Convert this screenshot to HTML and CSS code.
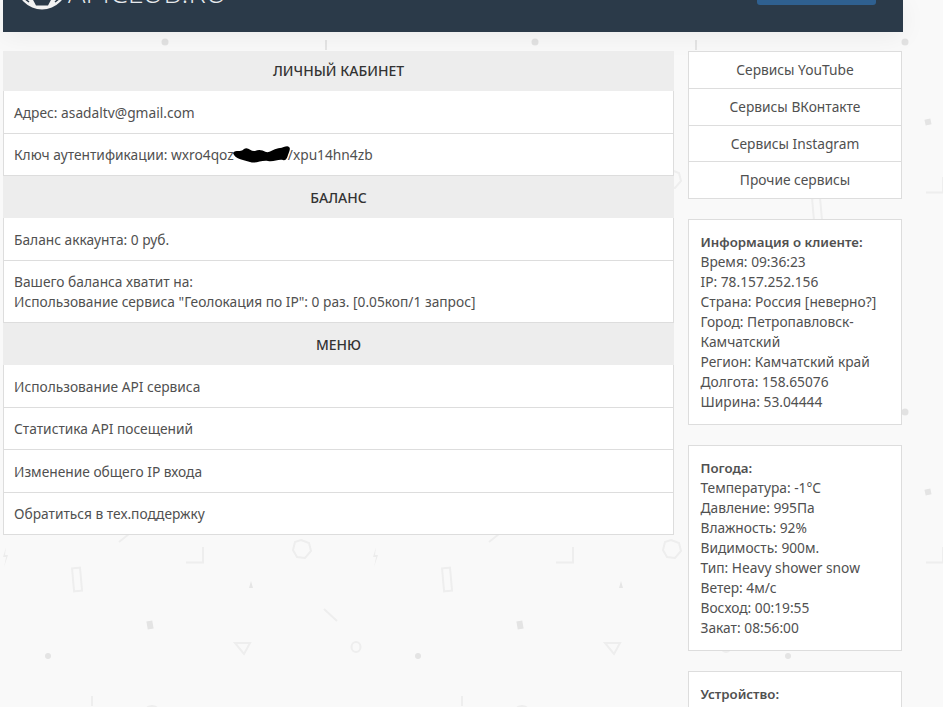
FILE: index.html
```html
<!DOCTYPE html>
<html lang="ru">
<head>
<meta charset="utf-8">
<title>Личный кабинет</title>
<link rel="stylesheet" href="styles.css">
</head>
<body>
<svg class="pattern" width="943" height="707" aria-hidden="true">
  <defs>
    <pattern id="tile" width="370" height="370" patternUnits="userSpaceOnUse">
      <g fill="none" stroke="#eeeeee" stroke-width="2">
        <circle cx="165" cy="42" r="3.5" fill="#e2e2e2" stroke="none"/>
        <path d="M326 40v10" stroke="#e4e4e4"/>
        <rect x="185" y="119" width="6" height="6" fill="#e4e4e4" stroke="none" transform="rotate(-12 188 122)"/>
        <path d="M301 170l8 3 2 8-6 7-8-1-4-7 2-8z"/>
        <path d="M6 177l-3 10h3l-2 10 4-12H5z" fill="#ececec" stroke="none"/>
        <path d="M186 192.500h17V177"/>
        <path d="M119 172l10-8"/>
        <rect x="73" y="198" width="8" height="23" transform="rotate(-5 77 209)"/>
        <path d="M251 211l2 7h-4z" fill="#e6e6e6" stroke="none"/>
        <rect x="147" y="251" width="6" height="8" fill="#e4e4e4" stroke="none" transform="rotate(-10 150 255)"/>
        <path d="M324 239l13 12"/>
        <path d="M235 273h15l-6 11z"/>
        <ellipse cx="356" cy="277" rx="4.500" ry="5"/>
        <circle cx="48" cy="286" r="3" fill="#e4e4e4" stroke="none"/>
        <path d="M92 326v10"/>
        <circle cx="152" cy="345" r="9"/>
      </g>
    </pattern>
  </defs>
  <rect width="943" height="707" fill="url(#tile)"/>
</svg>

<header class="topbar">
  <svg class="logo-mark" width="52" height="52" viewBox="0 0 52 52" aria-hidden="true">
    <circle cx="26" cy="26" r="25.500" fill="#f2f2f2"/>
    <path d="M16 40h20l-4 7.500H20z" fill="#2b3a49"/>
    <path d="M8 40l5 4M44 40l-5 4" fill="none" stroke="#2b3a49" stroke-width="1.500"/>
  </svg>
  <span class="logo-text">APICLUB.RU</span>
  <span class="top-button"></span>
</header>

<div class="layout">
  <main class="panel">
    <h2 class="panel-head first">Личный кабинет</h2>
    <div class="row">Адрес: asadaltv@gmail.com</div>
    <div class="row">Ключ аутентификации: wxro4qoz<span class="redact"><svg class="scribble" width="60" height="18" viewBox="0 0 60 18" aria-hidden="true"><path d="M1 8C4 4 8 8 12 4c4-3 7 3 11 2 4-2 7-1 11 1 4 1 9-4 14-4 3 0 7-3 9-1 2 1 0 5-1 8-1 3-2 6-5 5-5-1-9 2-15 1-7-1-12 3-18 1C11 15 3 14 1 8z" fill="#000"/></svg></span>/xpu14hn4zb</div>
    <h2 class="panel-head">Баланс</h2>
    <div class="row">Баланс аккаунта: 0 руб.</div>
    <div class="row">Вашего баланса хватит на:<br>Использование сервиса "Геолокация по IP": 0 раз. [0.05коп/1 запрос]</div>
    <h2 class="panel-head">Меню</h2>
    <div class="row">Использование API сервиса</div>
    <div class="row">Статистика API посещений</div>
    <div class="row">Изменение общего IP входа</div>
    <div class="row">Обратиться в тех.поддержку</div>
  </main>

  <aside class="side">
    <nav class="services">
      <a class="service">Сервисы YouTube</a>
      <a class="service">Сервисы ВКонтакте</a>
      <a class="service">Сервисы Instagram</a>
      <a class="service">Прочие сервисы</a>
    </nav>
    <section class="info">
      <strong>Информация о клиенте:</strong><br>
      Время: 09:36:23<br>
      IP: 78.157.252.156<br>
      Страна: Россия [неверно?]<br>
      Город: Петропавловск-Камчатский<br>
      Регион: Камчатский край<br>
      Долгота: 158.65076<br>
      Ширина: 53.04444
    </section>
    <section class="info">
      <strong>Погода:</strong><br>
      Температура: -1°C<br>
      Давление: 995Па<br>
      Влажность: 92%<br>
      Видимость: 900м.<br>
      Тип: Heavy shower snow<br>
      Ветер: 4м/с<br>
      Восход: 00:19:55<br>
      Закат: 08:56:00
    </section>
    <section class="info device">
      <strong>Устройство:</strong>
    </section>
  </aside>
</div>
</body>
</html>
```
FILE: styles.css
```css
html, body {
  margin: 0;
  height: 707px;
  overflow: hidden;
}

body {
  position: relative;
  background: #f9f9f9;
  color: #505050;
  font-family: "Noto Sans", "Open Sans", sans-serif;
  font-size: 13.75px;
  line-height: 20px;
}

.pattern {
  position: absolute;
  top: 0;
  left: 0;
  z-index: -1;
}

.topbar {
  display: flex;
  align-items: flex-end;
  box-sizing: border-box;
  width: 900px;
  height: 32px;
  margin-left: 3px;
  padding: 0 27px 22px 13px;
  overflow: hidden;
  background: #2b3a49;
  box-shadow: 0 4px 26px rgba(0, 0, 0, 0.06);
}

.logo-mark {
  flex: none;
}

.logo-text {
  margin-bottom: 3px;
  color: #e6e9ec;
  font-family: "Open Sans", sans-serif;
  font-size: 29px;
  font-weight: 300;
  line-height: 30px;
  white-space: nowrap;
}

.top-button {
  flex: none;
  width: 119px;
  height: 40px;
  margin-left: auto;
  margin-bottom: 5px;
  border-radius: 3px;
  background: #2f6090;
}

.layout {
  display: flex;
  align-items: flex-start;
  gap: 14px;
  padding: 19px 0 0 3px;
}

.panel {
  flex: none;
  width: 671px;
}

.panel-head {
  margin: 0;
  padding: 11.500px 0 10.500px;
  background: #ededed;
  color: #333;
  font-size: 14px;
  font-weight: 500;
  line-height: 20px;
  text-align: center;
  text-transform: uppercase;
}

.panel-head.first {
  padding: 10px 0;
}

.row {
  padding: 11.500px 10px 10px;
  border: 1px solid #ddd;
  border-top: 0;
  background: #fff;
}

.redact {
  position: relative;
  display: inline-block;
  width: 54px;
  height: 14px;
}

.scribble {
  position: absolute;
  left: -2px;
  top: -1px;
}

.side {
  display: flex;
  flex-direction: column;
  flex: none;
  gap: 20px;
  width: 214px;
}

.services {
  display: flex;
  flex-direction: column;
  border: 1px solid #ddd;
  background: #fff;
}

.service {
  padding: 8px 0 7.750px;
  border-bottom: 1px solid #ddd;
  text-align: center;
}

.service:last-child {
  border-bottom: 0;
}

.info {
  padding: 12px 12px 12px 11.500px;
  border: 1px solid #ddd;
  background: #fff;
}

.info strong {
  font-size: 13.250px;
  font-weight: 600;
}

.device {
  min-height: 80px;
}
```
